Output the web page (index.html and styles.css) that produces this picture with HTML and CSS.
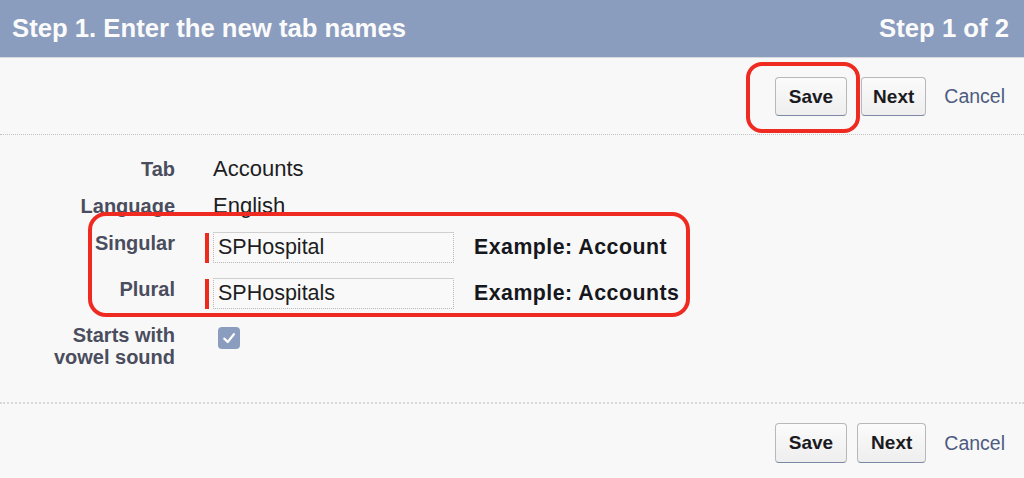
FILE: index.html
```html
<!DOCTYPE html>
<html>
<head>
<meta charset="utf-8">
<link rel="stylesheet" href="styles.css">
</head>
<body>
<div class="page">
  <header class="header">
    <h1 class="title">Step 1. Enter the new tab names</h1>
    <div class="step">Step 1 of 2</div>
  </header>

  <div class="bar bar-top">
    <span class="ring-wrap"><button class="btn">Save</button></span>
    <button class="btn btn-next-top">Next</button>
    <a class="cancel" href="#">Cancel</a>
  </div>

  <div class="form">
    <div class="row">
      <div class="label">Tab</div>
      <div class="value">Accounts</div>
    </div>
    <div class="row">
      <div class="label">Language</div>
      <div class="value">English</div>
    </div>
    <div class="group">
      <div class="row">
        <div class="label">Singular</div>
        <div class="field">
          <span class="req"></span>
          <input class="input" type="text" value="SPHospital">
          <span class="example">Example: Account</span>
        </div>
      </div>
      <div class="row">
        <div class="label">Plural</div>
        <div class="field">
          <span class="req"></span>
          <input class="input" type="text" value="SPHospitals">
          <span class="example">Example: Accounts</span>
        </div>
      </div>
      <div class="ring-inputs"></div>
    </div>
    <div class="row">
      <div class="label">Starts with<br>vowel sound</div>
      <div class="value">
        <span class="checkbox">
          <svg width="22" height="22" viewBox="0 0 22 22"><path d="M6.3 11.6 L9.7 15 L15.9 7.2" fill="none" stroke="#fff" stroke-width="2.2" stroke-linecap="round" stroke-linejoin="round"/></svg>
        </span>
      </div>
    </div>
  </div>

  <div class="bar bar-bottom">
    <button class="btn">Save</button>
    <button class="btn">Next</button>
    <a class="cancel" href="#">Cancel</a>
  </div>
</div>
</body>
</html>
```

FILE: styles.css
```css
* { box-sizing: border-box; }
html, body {
  margin: 0;
  padding: 0;
  background: #f8f8f8;
  font-family: "Liberation Sans", Arial, sans-serif;
}
.page {
  width: 1024px;
  height: 478px;
  overflow: hidden;
  background: #f8f8f8;
}
.header {
  height: 58px;
  background: #8b9dbe;
  border-bottom: 1px solid #d6d9e0;
  display: flex;
  align-items: center;
  justify-content: space-between;
  padding: 0 15px 0 12px;
  color: #fbfbfb;
}
.title {
  margin: 0;
  font-size: 25.7px;
  font-weight: bold;
}
.step {
  font-size: 25.7px;
  font-weight: bold;
}
.bar {
  display: flex;
  align-items: center;
  justify-content: flex-end;
  padding-right: 19px;
}
.bar-top {
  height: 77px;
  border-bottom: 1px dotted #c4c4c4;
  padding-top: 1px;
}
.bar-bottom {
  height: 78px;
  border-top: 2px dotted #d8d8d8;
  padding-top: 2px;
}
.btn {
  height: 39px;
  padding: 0 13px;
  font-family: "Liberation Sans", Arial, sans-serif;
  font-size: 19px;
  font-weight: bold;
  color: #1b1b1f;
  background: linear-gradient(#fbfbfb, #eeeeee);
  border: 1px solid #b8b8b8;
  border-bottom-color: #7d88a4;
  border-radius: 4px;
  margin-left: 10px;
}
.bar-bottom .btn { height: 40px; }
.btn-next-top {
  margin-left: 14px;
  padding: 0 11px;
}
.ring-wrap {
  position: relative;
  display: inline-flex;
}
.ring-wrap::after {
  content: "";
  position: absolute;
  left: -19px;
  top: -15px;
  right: -13px;
  bottom: -17px;
  border: 4px solid #ef2a20;
  border-radius: 16px;
  pointer-events: none;
}
.cancel {
  margin-left: 18px;
  font-size: 19.5px;
  color: #4d5c80;
  text-decoration: none;
}
.form {
  display: flex;
  flex-direction: column;
  gap: 15px;
  padding: 23px 0 34px;
}
.group {
  position: relative;
  display: flex;
  flex-direction: column;
  gap: 15px;
}
.ring-inputs {
  position: absolute;
  left: 88px;
  width: 602px;
  top: -20px;
  bottom: -8px;
  border: 4px solid #ef2a20;
  border-radius: 18px;
  pointer-events: none;
}
.row {
  display: flex;
  align-items: flex-start;
}
.label {
  width: 175px;
  text-align: right;
  font-size: 20px;
  line-height: 22px;
  font-weight: bold;
  color: #4a4d5d;
  flex: none;
}
.value {
  margin-left: 38px;
  font-size: 22px;
  line-height: 22px;
  color: #1d1d22;
}
.field {
  margin-left: 30px;
  display: flex;
  align-items: center;
}
.req {
  width: 4px;
  height: 30px;
  background: #ec2a1e;
  margin-right: 4px;
  align-self: flex-end;
}
.input {
  width: 241px;
  height: 31px;
  border: 1px dotted #b8b8b8;
  border-top: 1px solid #cfcfcf;
  background: #f9f9f9;
  padding: 0 4px;
  font-family: "Liberation Sans", Arial, sans-serif;
  font-size: 21.5px;
  color: #1d1d22;
  outline: none;
}
.example {
  margin-left: 20px;
  font-size: 21.3px;
  font-weight: bold;
  letter-spacing: 0.5px;
  color: #16171c;
}
.checkbox {
  display: inline-block;
  width: 22px;
  height: 22px;
  margin: 3px 0 0 5px;
  background: #8b9dbe;
  border-radius: 4px;
}
.checkbox svg { display: block; }
```
